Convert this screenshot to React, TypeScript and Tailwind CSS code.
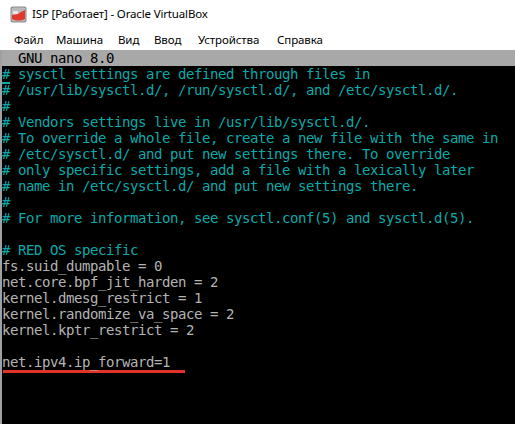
import React from 'react';

const lines: { text: string; kind: 'c' | 'v' | 'b' }[] = [
  { text: '# sysctl settings are defined through files in', kind: 'c' },
  { text: '# /usr/lib/sysctl.d/, /run/sysctl.d/, and /etc/sysctl.d/.', kind: 'c' },
  { text: '#', kind: 'c' },
  { text: '# Vendors settings live in /usr/lib/sysctl.d/.', kind: 'c' },
  { text: '# To override a whole file, create a new file with the same in', kind: 'c' },
  { text: '# /etc/sysctl.d/ and put new settings there. To override', kind: 'c' },
  { text: '# only specific settings, add a file with a lexically later', kind: 'c' },
  { text: '# name in /etc/sysctl.d/ and put new settings there.', kind: 'c' },
  { text: '#', kind: 'c' },
  { text: '# For more information, see sysctl.conf(5) and sysctl.d(5).', kind: 'c' },
  { text: '', kind: 'b' },
  { text: '# RED OS specific', kind: 'c' },
  { text: 'fs.suid_dumpable = 0', kind: 'v' },
  { text: 'net.core.bpf_jit_harden = 2', kind: 'v' },
  { text: 'kernel.dmesg_restrict = 1', kind: 'v' },
  { text: 'kernel.randomize_va_space = 2', kind: 'v' },
  { text: 'kernel.kptr_restrict = 2', kind: 'v' },
  { text: '', kind: 'b' },
  { text: 'net.ipv4.ip_forward=1', kind: 'v' },
];

function VBoxIcon() {
  return (
    <svg width="17" height="17" viewBox="0 0 17 17">
      <rect x="0.5" y="0.5" width="16" height="16" rx="2" fill="#8c8c8c" />
      <rect x="1.5" y="1.5" width="14" height="14" rx="1.5" fill="#b9b9b9" />
      <path d="M2 9 C5 9 9 8 11 6 L15 4 L15 13 C11 15 6 15 2 13 Z" fill="#e03a2c" />
      <path d="M3 5 L8 5 L8 8 L3 8 Z" fill="#f2f2f2" opacity="0.8" />
    </svg>
  );
}

const menu = [
  { label: 'Файл', w: 'w-[42px]' },
  { label: 'Машина', w: 'w-[62px]' },
  { label: 'Вид', w: 'w-[36px]' },
  { label: 'Ввод', w: 'w-[44px]' },
  { label: 'Устройства', w: 'w-[79px]' },
  { label: 'Справка', w: 'w-[60px]' },
];

export default function App() {
  return (
    <div className="w-[515px] h-[424px] bg-white overflow-hidden flex flex-col">
      <div className="h-[27px] flex items-center pl-[10px] gap-[5px] pt-[1px]" style={{ fontFamily: '"Noto Sans", "Open Sans", sans-serif' }}>
        <VBoxIcon />
        <span className="text-[11.5px] text-black tracking-[-0.15px]">ISP [Работает] - Oracle VirtualBox</span>
      </div>
      <div className="h-[23px] flex items-center pl-[14px] pt-[3px] text-[11.5px] text-black tracking-[-0.1px]" style={{ fontFamily: '"Noto Sans", "Open Sans", sans-serif' }}>
        {menu.map((m) => (
          <span key={m.label} className={m.w}>{m.label}</span>
        ))}
      </div>
      <div className="flex-1 flex">
        <div className="w-[2px] bg-[#a0a0a0]" />
        <div
          className="flex-1 bg-black text-[14px] leading-[16px] tracking-[-0.43px] whitespace-pre"
          style={{ fontFamily: '"DejaVu Sans Mono", "Liberation Mono", monospace' }}
        >
          <div className="h-[16px] bg-[#a8a8a8] text-black">  GNU nano 8.0</div>
          {lines.map((l, i) => (
            <div
              key={i}
              className={`h-[16px] ${l.kind === 'c' ? 'text-[#0aaaaa]' : 'text-[#b4b4b4]'}`}
            >
              {i === 0 ? (
                <>
                  <span className="border-b-2 border-[#0aaaaa]">#</span>
                  {l.text.slice(1)}
                </>
              ) : (
                l.text
              )}
            </div>
          ))}
          <div className="h-[3px] w-[182px] ml-[1px] bg-[#e2332b]" />
        </div>
      </div>
    </div>
  );
}
